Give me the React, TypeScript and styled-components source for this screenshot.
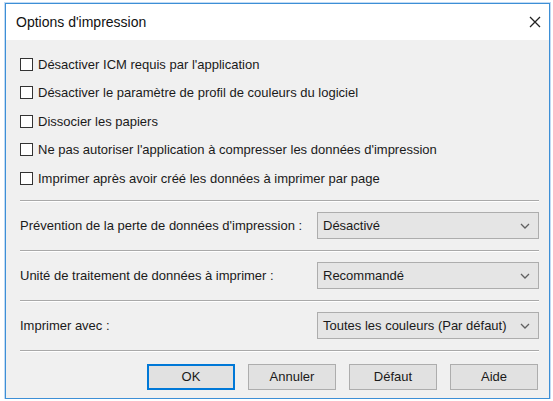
import React from "react";
import styled, { createGlobalStyle } from "styled-components";

const Global = createGlobalStyle`
  html, body { margin: 0; padding: 0; background: #ffffff; }
  body { font-family: "Liberation Sans", Arial, sans-serif; }
  * { box-sizing: border-box; }
`;

const Window = styled.div`
  margin: 3px 0 0 5px;
  width: 545px;
  height: 396px;
  border: 1px solid #3d8fd6;
  box-shadow: 0 0 0 1px rgba(120, 175, 230, 0.45);
  display: flex;
  flex-direction: column;
  background: #f0f0f0;
  color: #1a1a1a;
`;

const TitleBar = styled.div`
  height: 36px;
  flex: 0 0 36px;
  background: #ffffff;
  display: flex;
  align-items: center;
  justify-content: space-between;
  padding: 0 6px 0 10px;
`;

const Title = styled.span`
  font-size: 14px;
  color: #111;
`;

const CloseButton = styled.div`
  width: 16px;
  height: 16px;
  display: flex;
  align-items: center;
  justify-content: center;
`;

const Body = styled.div`
  flex: 1;
  display: flex;
  flex-direction: column;
  padding: 10px 10px 0 14px;
`;

const CheckList = styled.div`
  display: flex;
  flex-direction: column;
  margin-bottom: 7px;
`;

const CheckRow = styled.label`
  height: 28.5px;
  display: flex;
  align-items: center;
  gap: 5px;
  font-size: 13px;
`;

const Box = styled.span`
  width: 13px;
  height: 13px;
  flex: 0 0 13px;
  background: #ffffff;
  border: 1px solid #333333;
`;

const Separator = styled.div`
  height: 2px;
  border-top: 1px solid #a9a9a9;
  border-bottom: 1px solid #ffffff;
`;

const SettingRow = styled.div`
  height: 48px;
  display: flex;
  align-items: center;
  justify-content: space-between;
  font-size: 13px;
`;

const Select = styled.div`
  width: 222px;
  height: 27px;
  background: #e5e5e5;
  border: 1px solid #adadad;
  display: flex;
  align-items: center;
  justify-content: space-between;
  padding: 0 8px 0 5px;
  font-size: 13px;
`;

const ButtonRow = styled.div`
  margin-top: 12px;
  display: flex;
  justify-content: flex-end;
  gap: 13px;
  padding-right: 1px;
`;

const Button = styled.div<{ $primary?: boolean }>`
  width: 88px;
  height: 26px;
  display: flex;
  align-items: center;
  justify-content: center;
  background: #e1e1e1;
  border: ${(p) => (p.$primary ? "2px solid #0078d7" : "1px solid #adadad")};
  font-size: 13px;
`;

const Chevron = () => (
  <svg width="10" height="6" viewBox="0 0 10 6">
    <path d="M1 1 L5 5 L9 1" fill="none" stroke="#606060" strokeWidth="1.3" />
  </svg>
);

const checks = [
  "Désactiver ICM requis par l'application",
  "Désactiver le paramètre de profil de couleurs du logiciel",
  "Dissocier les papiers",
  "Ne pas autoriser l'application à compresser les données d'impression",
  "Imprimer après avoir créé les données à imprimer par page",
];

const settings = [
  { label: "Prévention de la perte de données d'impression :", value: "Désactivé" },
  { label: "Unité de traitement de données à imprimer :", value: "Recommandé" },
  { label: "Imprimer avec :", value: "Toutes les couleurs (Par défaut)" },
];

export default function App() {
  return (
    <>
      <Global />
      <Window>
        <TitleBar>
          <Title>Options d'impression</Title>
          <CloseButton>
            <svg width="12" height="12" viewBox="0 0 12 12">
              <path d="M1 1 L11 11 M11 1 L1 11" stroke="#222" strokeWidth="1.3" />
            </svg>
          </CloseButton>
        </TitleBar>
        <Body>
          <CheckList>
            {checks.map((c) => (
              <CheckRow key={c}>
                <Box />
                <span>{c}</span>
              </CheckRow>
            ))}
          </CheckList>
          {settings.map((s) => (
            <React.Fragment key={s.label}>
              <Separator />
              <SettingRow>
                <span>{s.label}</span>
                <Select>
                  <span>{s.value}</span>
                  <Chevron />
                </Select>
              </SettingRow>
            </React.Fragment>
          ))}
          <Separator />
          <ButtonRow>
            <Button $primary>OK</Button>
            <Button>Annuler</Button>
            <Button>Défaut</Button>
            <Button>Aide</Button>
          </ButtonRow>
        </Body>
      </Window>
    </>
  );
}
